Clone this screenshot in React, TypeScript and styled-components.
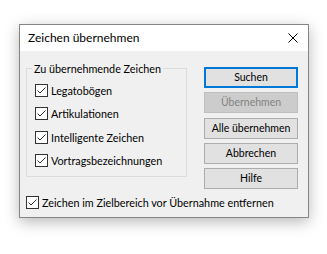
import React from "react";
import styled, { createGlobalStyle, css } from "styled-components";

const Global = createGlobalStyle`
  html, body { margin: 0; padding: 0; background: #ffffff; }
  body { font-family: "Segoe UI", Lato, "Liberation Sans", sans-serif; }
  * { box-sizing: border-box; }
`;

const Page = styled.div`
  width: 327px;
  height: 254px;
  padding: 24px 0 0 19px;
`;

const Window = styled.div`
  width: 290px;
  height: 194px;
  border: 1px solid #858585;
  background: #f0f0f0;
  box-shadow: 0 4px 14px rgba(0, 0, 0, 0.28);
  display: flex;
  flex-direction: column;
`;

const TitleBar = styled.div`
  flex: none;
  height: 26px;
  background: #ffffff;
  display: flex;
  align-items: center;
  justify-content: space-between;
  padding: 0 10px 0 8px;
`;

const Title = styled.span`
  font-size: 12px;
  color: #000;
  line-height: 16px;
`;

const Body = styled.div`
  flex: 1;
  display: flex;
  flex-direction: column;
  padding: 10px 10px 0 6px;
  font-size: 10.8px;
  color: #000;
`;

const TopRow = styled.div`
  display: flex;
  align-items: flex-start;
`;

const Group = styled.fieldset`
  margin: 0;
  width: 161px;
  min-width: 0;
  border: 1px solid #dcdcdc;
  padding: 8px 0 9px 8px;
  display: flex;
  flex-direction: column;
  gap: 10.33px;
`;

const Legend = styled.legend`
  padding: 0 2px;
  margin-left: -3px;
  font-size: 10.8px;
  line-height: 15px;
`;

const CheckRow = styled.label`
  display: flex;
  align-items: center;
  gap: 3px;
  height: 13px;
  line-height: 13px;
  white-space: nowrap;
`;

const Box = styled.span`
  width: 13px;
  height: 13px;
  flex: none;
  border: 1px solid #333333;
  background: #ffffff;
  display: flex;
`;

const Buttons = styled.div`
  margin-left: 17px;
  margin-top: 6px;
  display: flex;
  flex-direction: column;
  gap: 4.25px;
`;

const Button = styled.button<{ $primary?: boolean }>`
  width: 94px;
  height: 21px;
  margin: 0;
  padding: 0;
  font-family: inherit;
  font-size: 10.5px;
  line-height: 17px;
  color: #000;
  background: #e1e1e1;
  border: 1px solid #adadad;
  ${(p) =>
    p.$primary &&
    css`
      border: 2px solid #0078d7;
    `}
  &:disabled {
    background: #cccccc;
    border-color: #bfbfbf;
    color: #838383;
  }
`;

const BottomRow = styled(CheckRow)`
  margin-top: 7px;
`;

const Check = () => (
  <Box>
    <svg width="11" height="11" viewBox="0 0 11 11">
      <polyline
        points="1.5,5.5 4,8 9.5,2.5"
        fill="none"
        stroke="#333333"
        strokeWidth="1"
      />
    </svg>
  </Box>
);

const CloseIcon = () => (
  <svg width="10" height="10" viewBox="0 0 10 10">
    <path d="M0.5 0.5 L9.5 9.5 M9.5 0.5 L0.5 9.5" stroke="#000" strokeWidth="1" />
  </svg>
);

const items = [
  "Legatobögen",
  "Artikulationen",
  "Intelligente Zeichen",
  "Vortragsbezeichnungen",
];

export default function App() {
  return (
    <Page>
      <Global />
      <Window>
        <TitleBar>
          <Title>Zeichen übernehmen</Title>
          <CloseIcon />
        </TitleBar>
        <Body>
          <TopRow>
            <Group>
              <Legend>Zu übernehmende Zeichen</Legend>
              {items.map((t) => (
                <CheckRow key={t}>
                  <Check />
                  {t}
                </CheckRow>
              ))}
            </Group>
            <Buttons>
              <Button $primary>Suchen</Button>
              <Button disabled>Übernehmen</Button>
              <Button>Alle übernehmen</Button>
              <Button>Abbrechen</Button>
              <Button>Hilfe</Button>
            </Buttons>
          </TopRow>
          <BottomRow>
            <Check />
            Zeichen im Zielbereich vor Übernahme entfernen
          </BottomRow>
        </Body>
      </Window>
    </Page>
  );
}
